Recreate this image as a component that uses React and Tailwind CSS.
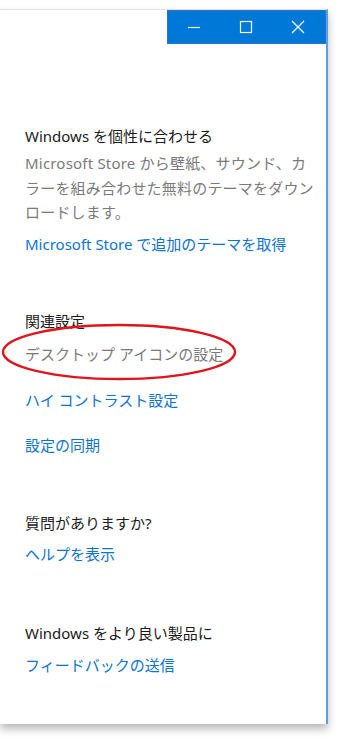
export default function App() {
  const font = { fontFamily: '"Noto Sans", "Noto Sans CJK JP", sans-serif' }

  return (
    <div className="w-[340px] h-[740px] bg-white overflow-hidden pt-[9px]" style={font}>
      {/* Window */}
      <div className="w-[328px] h-[715px] bg-white border-t border-[#e3e3e3] border-r-2 border-r-[#5d9de3] shadow-[0_5px_8px_rgba(0,0,0,0.28)] flex flex-col">
        {/* Title bar */}
        <div className="flex justify-end">
          <div className="w-[159px] h-[34px] bg-[#0078d7] border border-[#2a73c9] flex items-center text-white">
            <div className="w-[52px] flex justify-center">
              <svg width="14" height="14" viewBox="0 0 14 14">
                <path d="M1 7.5h12" stroke="white" strokeWidth="1.2" />
              </svg>
            </div>
            <div className="w-[52px] flex justify-center">
              <svg width="14" height="14" viewBox="0 0 14 14">
                <rect x="1.5" y="1.5" width="11" height="11" fill="none" stroke="white" strokeWidth="1.2" />
              </svg>
            </div>
            <div className="w-[52px] flex justify-center">
              <svg width="14" height="14" viewBox="0 0 14 14">
                <path d="M1 1l12 12M13 1L1 13" stroke="white" strokeWidth="1.2" />
              </svg>
            </div>
          </div>
        </div>

        {/* Content */}
        <div className="pl-[25px] text-[15px] leading-[24px] whitespace-nowrap">
          <div className="mt-[80px] text-[#1b1b1b]">Windows を個性に合わせる</div>
          <p className="mt-[3px] text-[#7a7a7a] leading-[24.5px] tracking-[0.2px]">
            Microsoft Store から壁紙、サウンド、カ<br />
            ラーを組み合わせた無料のテーマをダウン<br />
            ロードします。
          </p>
          <div className="mt-[7px] text-[#0a74d1]">Microsoft Store で追加のテーマを取得</div>

          <div className="mt-[53px] text-[#1b1b1b]">関連設定</div>
          <div className="mt-[9px] relative text-[#7a7a7a]">
            デスクトップ アイコンの設定
            {/* annotation ellipse */}
            <svg className="absolute left-[-24px] top-[-19px]" width="236" height="58" viewBox="0 0 236 58">
              <ellipse cx="118" cy="29" rx="116" ry="27" fill="none" stroke="#e0141b" strokeWidth="2.4" />
            </svg>
          </div>
          <div className="mt-[22px] text-[#0a74d1]">ハイ コントラスト設定</div>
          <div className="mt-[21px] text-[#0a74d1]">設定の同期</div>

          <div className="mt-[54px] text-[#1b1b1b]">質問がありますか?</div>
          <div className="mt-[7px] text-[#0a74d1]">ヘルプを表示</div>

          <div className="mt-[55px] text-[#1b1b1b]">Windows をより良い製品に</div>
          <div className="mt-[8px] text-[#0a74d1]">フィードバックの送信</div>
        </div>
      </div>
    </div>
  )
}
